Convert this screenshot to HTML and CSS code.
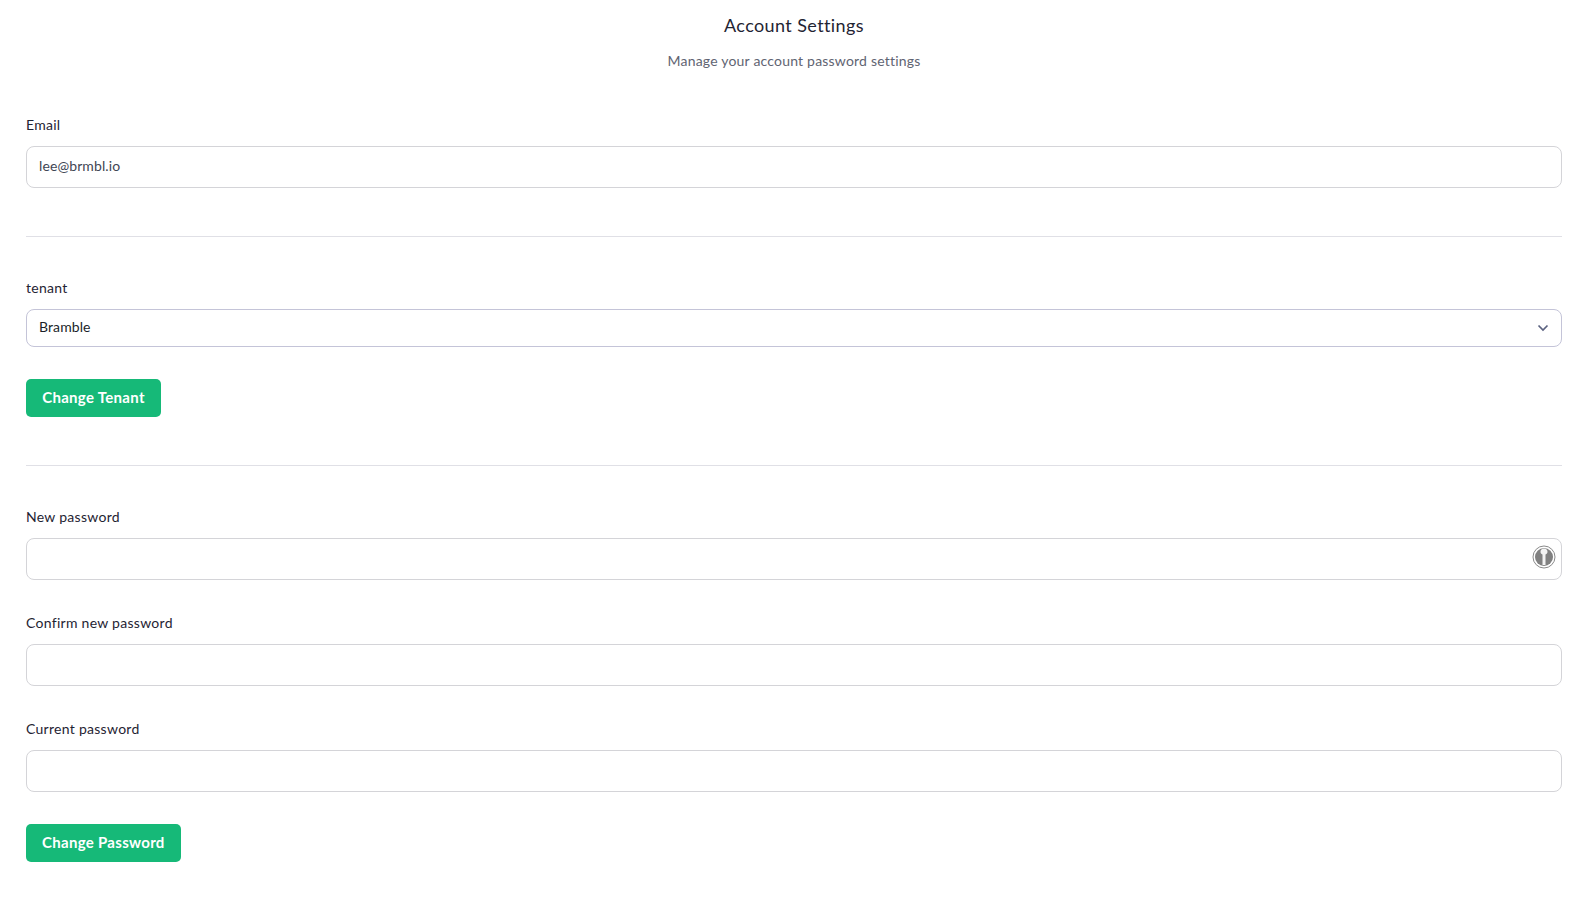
FILE: index.html
```html
<!DOCTYPE html>
<html lang="en">
<head>
<meta charset="utf-8">
<title>Account Settings</title>
<link rel="stylesheet" href="styles.css">
</head>
<body>
<main class="page">
  <header class="head">
    <h1 class="title">Account Settings</h1>
    <p class="subtitle">Manage your account password settings</p>
  </header>
  <section class="section">
    <div class="field">
      <label class="label">Email</label>
      <div class="input">lee@brmbl.io</div>
    </div>
  </section>
  <hr class="rule">
  <section class="section">
    <div class="field">
      <label class="label">tenant</label>
      <div class="select">
        <span>Bramble</span>
        <svg class="chev" viewBox="0 0 12 8" width="12" height="8"><path d="M1.5 1.5 6 6l4.500-4.500" fill="none" stroke="#5b6280" stroke-width="1.700"/></svg>
      </div>
    </div>
    <button class="btn">Change Tenant</button>
  </section>
  <hr class="rule">
  <section class="section stack">
    <div class="field">
      <label class="label">New password</label>
      <div class="input has-key">
        <svg class="key" viewBox="0 0 24 24" width="24" height="24">
          <circle cx="12" cy="12" r="11" fill="#fff" stroke="#8a8a8a" stroke-width="1"/>
          <circle cx="12" cy="12" r="9" fill="#808080"/>
          <path d="M12 3.500c2.300 0 3.500 1.500 3.500 3.200 0 1.300-.8 2.300-2 2.800V20h-3V9.500c-1.200-.5-2-1.500-2-2.800C8.500 5 9.700 3.500 12 3.500z" fill="#f2f2f2"/>
        </svg>
      </div>
    </div>
    <div class="field">
      <label class="label">Confirm new password</label>
      <div class="input"></div>
    </div>
    <div class="field">
      <label class="label">Current password</label>
      <div class="input"></div>
    </div>
    <button class="btn">Change Password</button>
  </section>
</main>
</body>
</html>
```
FILE: styles.css
```css
* { box-sizing: border-box; }
html, body { margin: 0; background: #fff; }
body { font-family: "Lato", "Open Sans", sans-serif; color: #1f2433; }
.page { padding: 0 16px 0 26px; display: flex; flex-direction: column; }
.head { text-align: center; padding-top: 14px; height: 116px; }
.title { margin: 0; font-size: 18px; line-height: 22px; font-weight: 400; letter-spacing: .4px; color: #1f2433; }
.subtitle { margin: 14px 0 0; font-size: 14px; line-height: 21px; letter-spacing: .2px; color: #5f6472; }
.section { display: flex; flex-direction: column; align-items: flex-start; }
.field { width: 100%; display: flex; flex-direction: column; }
.label { font-size: 14px; line-height: 18px; height: 20px; margin-bottom: 10px; letter-spacing: .28px; }
.input { height: 42px; border: 1px solid #d4d4d8; border-radius: 8px; padding: 0 12px 4px; font-size: 14px; letter-spacing: .1px; color: #3f4654; display: flex; align-items: center; justify-content: space-between; }
.has-key { padding-right: 5px; justify-content: flex-end; }
.key { display: block; }
.select { height: 38px; border: 1px solid #c4c4d8; border-radius: 8px; padding: 0 12px 0 12px; font-size: 14px; letter-spacing: .1px; color: #1b1f2a; display: flex; align-items: center; justify-content: space-between; }
.select span { margin-top: -3px; }
.chev { display: block; }
.btn { margin-top: 32px; height: 38px; padding: 0 16px 2px; border: 0; border-radius: 5px; background: #16b978; color: #fff; font: 700 15px "Lato", sans-serif; letter-spacing: .3px; min-width: 135px; }
.rule { width: 100%; border: 0; border-top: 1px solid #e0e0e6; margin: 48px 0 42px; }
.stack .field + .field { margin-top: 34px; }
```
